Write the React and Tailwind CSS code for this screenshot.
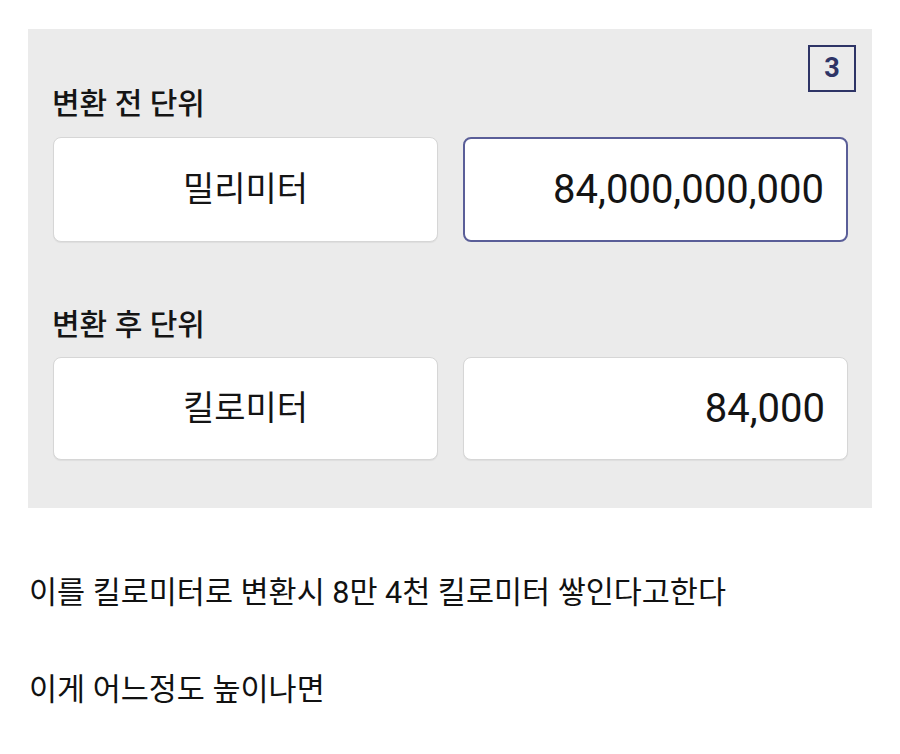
import React from 'react';

const font = { fontFamily: 'Roboto, "Noto Sans CJK KR", sans-serif' };

const UnitRow = ({ label, unit, value, active, labelGap, rowHeight }) => (
    <>
        <div className={`h-[40px] leading-[40px] text-[30px] font-medium text-[#151515] pl-[24px] ${labelGap}`}>
            {label}
        </div>
        <div className={`grid grid-cols-2 gap-[25px] ${rowHeight}`}>
            <div className="flex items-center justify-center bg-white rounded-[8px] border border-[#d6d6d6] shadow-[0_1px_1px_rgba(0,0,0,0.06)] text-[34px] text-[#141414]">
                {unit}
            </div>
            <div
                className={`flex items-center justify-end pr-[22px] bg-white rounded-[8px] text-[40px] text-[#141414] ${active
                    ? 'border-2 border-[#5a5e98]'
                    : 'border border-[#d6d6d6] shadow-[0_1px_1px_rgba(0,0,0,0.06)]'
                    }`}
            >
                {value}
            </div>
        </div>
    </>
);

const App = () => {
    return (
        <div className="w-[900px] h-[754px] bg-white" style={font}>
            <div className="pt-[29px] pl-[28px]">
                <div className="relative w-[844px] h-[479px] bg-[#ebebeb] pt-[55px] pr-[24px]">
                    <div className="absolute top-[16px] right-[16px] w-[48px] h-[47px] border-2 border-[#2e3466] flex items-center justify-center text-[27px] font-bold text-[#2e3466]">
                        3
                    </div>

                    <UnitRow
                        label="변환 전 단위"
                        unit="밀리미터"
                        value="84,000,000,000"
                        active
                        labelGap="mb-[13px]"
                        rowHeight="h-[105px] pl-[25px]"
                    />
                    <div className="h-[63px]"></div>
                    <UnitRow
                        label="변환 후 단위"
                        unit="킬로미터"
                        value="84,000"
                        labelGap="mb-[12px]"
                        rowHeight="h-[103px] pl-[25px]"
                    />
                </div>
            </div>

            <div className="pl-[29px] pt-[65px] text-[30.5px] text-[#111111]">
                <p className="h-[40px] leading-[40px]">이를 킬로미터로 변환시 8만 4천 킬로미터 쌓인다고한다</p>
                <p className="h-[40px] leading-[40px] mt-[57px]">이게 어느정도 높이나면</p>
            </div>
        </div>
    );
};

export default App;
